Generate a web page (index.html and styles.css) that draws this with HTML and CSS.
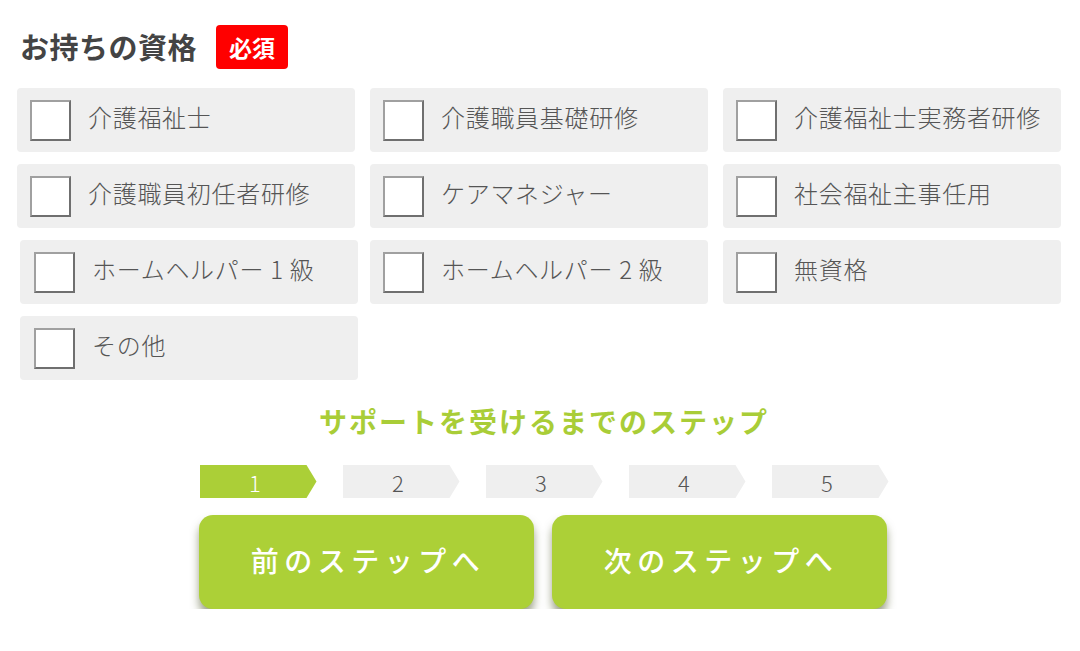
FILE: index.html
```html
<!DOCTYPE html>
<html lang="ja">
<head>
  <meta charset="UTF-8" />
  <meta name="viewport" content="width=device-width, initial-scale=1.0" />
  <title>お持ちの資格</title>
  <link rel="stylesheet" href="styles.css">
</head>
<body>
  <main class="wrap">
    <div class="field-head">
      <h2>お持ちの資格</h2>
      <span class="badge">必須</span>
    </div>

    <div class="options">
      <label class="option"><input type="checkbox"><span>介護福祉士</span></label>
      <label class="option"><input type="checkbox"><span>介護職員基礎研修</span></label>
      <label class="option"><input type="checkbox"><span>介護福祉士実務者研修</span></label>
      <label class="option"><input type="checkbox"><span>介護職員初任者研修</span></label>
      <label class="option"><input type="checkbox"><span>ケアマネジャー</span></label>
      <label class="option"><input type="checkbox"><span>社会福祉主事任用</span></label>
      <label class="option shift"><input type="checkbox"><span>ホームヘルパー 1 級</span></label>
      <label class="option"><input type="checkbox"><span>ホームヘルパー 2 級</span></label>
      <label class="option"><input type="checkbox"><span>無資格</span></label>
      <label class="option shift"><input type="checkbox"><span>その他</span></label>
    </div>

    <h3 class="steps-title">サポートを受けるまでのステップ</h3>

    <ol class="steps">
      <li class="active">1</li>
      <li>2</li>
      <li>3</li>
      <li>4</li>
      <li>5</li>
    </ol>

    <div class="actions">
      <button type="button">前のステップへ</button>
      <button type="button">次のステップへ</button>
    </div>
  </main>
</body>
</html>
```

FILE: styles.css
```css
body {
  margin: 0;
  background: #fff;
  font-family: "Noto Sans CJK JP", "Noto Sans", sans-serif;
  color: #555;
}
.wrap {
  padding: 25px 19px 0 17px;
}
.field-head {
  display: flex;
  align-items: center;
  gap: 19px;
  height: 44px;
  padding-left: 3px;
}
.field-head h2 {
  margin: 0 0 3px;
  font-size: 29px;
  font-weight: 700;
  color: #444;
  letter-spacing: 0.5px;
}
.badge {
  background: #ff0000;
  color: #fff;
  font-size: 23px;
  font-weight: 700;
  line-height: 44px;
  padding: 0 13px;
  border-radius: 4px;
  letter-spacing: 0;
}
.options {
  display: grid;
  grid-template-columns: repeat(3, 338px);
  gap: 12px 15px;
  margin-top: 19px;
}
.option {
  display: flex;
  align-items: center;
  height: 64px;
  background: #efefef;
  border-radius: 4px;
  padding-left: 13px;
  box-sizing: border-box;
  font-size: 24px;
  font-weight: 300;
  color: #555;
  letter-spacing: 0.7px;
}
.option span {
  margin-bottom: 8px;
}
.option.shift {
  margin-left: 3px;
  margin-right: -3px;
  padding-left: 14px;
}
.option input {
  appearance: none;
  margin: 0 17px 0 0;
  width: 41px;
  height: 41px;
  background: #fff;
  border: 2px solid #6f6f6f;
  border-left-color: #a0a0a0;
  border-top-color: #a0a0a0;
  box-sizing: border-box;
}
.steps-title {
  margin: 21px 0 0;
  text-align: center;
  font-size: 28px;
  font-weight: 700;
  color: #a9cd37;
  letter-spacing: 2px;
  padding-left: 10px;
}
.steps {
  list-style: none;
  margin: 24px 0 0;
  padding: 0 0 0 10px;
  display: flex;
  justify-content: center;
  gap: 26px;
}
.steps li {
  width: 117px;
  height: 33px;
  line-height: 35px;
  background: #efefef;
  clip-path: polygon(0 0, 107px 0, 117px 50%, 107px 100%, 0 100%);
  text-align: center;
  padding-right: 6px;
  box-sizing: border-box;
  font-size: 22px;
  font-weight: 300;
  color: #555;
}
.steps li.active {
  background: #abcf37;
  color: #fff;
}
.actions {
  display: flex;
  justify-content: center;
  gap: 18px;
  margin-top: 17px;
  padding-left: 8px;
}
.actions button {
  width: 335px;
  height: 94px;
  border: none;
  border-radius: 14px;
  background: #acd037;
  color: #fff;
  font-family: inherit;
  font-size: 28px;
  font-weight: 500;
  letter-spacing: 5.5px;
  text-indent: 3px;
  padding-bottom: 6px;
  box-shadow: 0 7px 8px rgba(60, 70, 20, 0.5);
  cursor: pointer;
}
```
